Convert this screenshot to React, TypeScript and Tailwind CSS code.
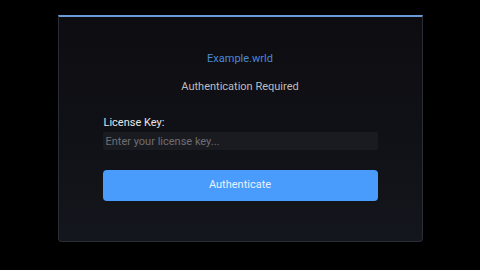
export default function App() {
  return (
    <div className="w-[480px] h-[270px] bg-black pt-[15px] flex justify-center font-['Roboto',sans-serif]">
      <div className="w-[365px] h-[227px] rounded-b-[4px] border-x border-b border-[#2a2d35] border-t-2 border-t-[#6a9bd8] bg-gradient-to-b from-[#0d0c11] to-[#13161c] px-[44px] flex flex-col">
        <div className="mt-[35px] text-center text-[11px] leading-[13px] text-[#4a8ad4]">Example.wrld</div>
        <div className="mt-[15px] text-center text-[11px] leading-[13px] text-[#bdbdbd]">Authentication Required</div>
        <div className="mt-[23px] text-[11px] leading-[13px] text-[#e6e6e6] pl-px">License Key:</div>
        <input
          type="text"
          placeholder="Enter your license key..."
          className="mt-[3px] h-[18px] w-full rounded-[2px] bg-[#1a1b21] px-[3px] text-[11px] text-[#ddd] placeholder:text-[#6e6e72] focus:outline-none"
        />
        <button
          type="button"
          className="mt-[20px] h-[31px] w-full rounded-[4px] bg-[#4a9cfc] text-[11px] text-[#e8f0ff]"
        >
          Authenticate
        </button>
      </div>
    </div>
  );
}
